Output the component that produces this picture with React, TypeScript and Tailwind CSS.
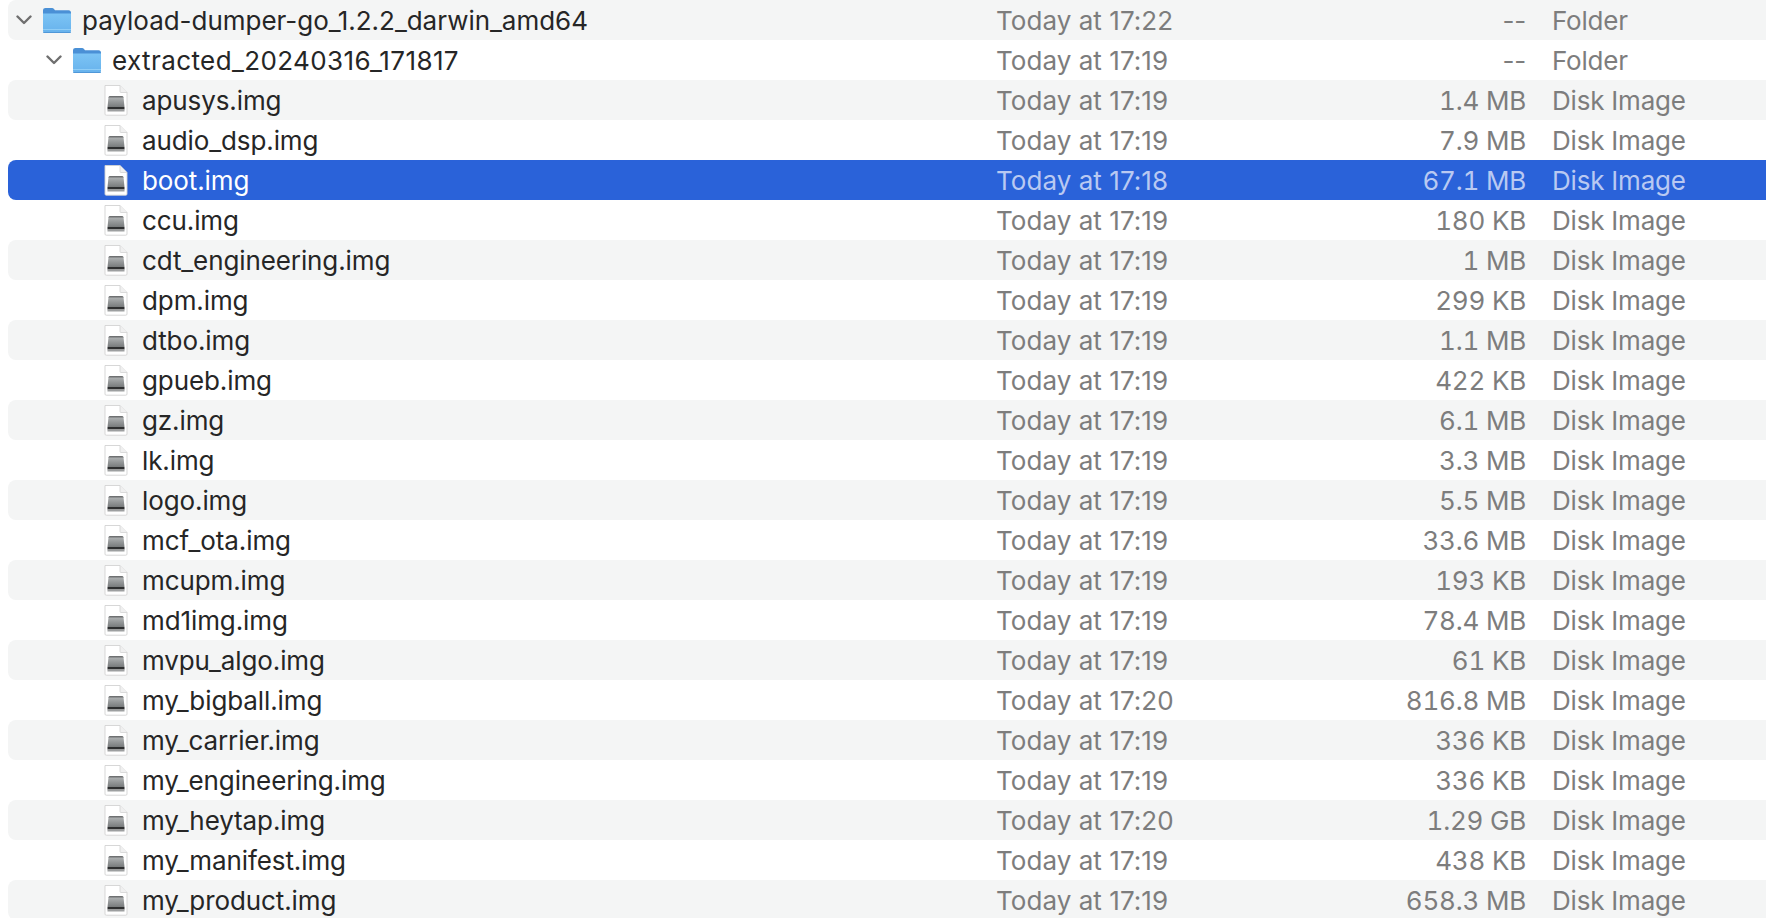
import React from "react";

type Row = { name: string; date: string; size: string; kind: string; depth: number; folder?: boolean };

const img = (name: string, size: string, date = "Today at 17:19"): Row => ({ name, date, size, kind: "Disk Image", depth: 2 });

const rows: Row[] = [
  { name: "payload-dumper-go_1.2.2_darwin_amd64", date: "Today at 17:22", size: "--", kind: "Folder", depth: 0, folder: true },
  { name: "extracted_20240316_171817", date: "Today at 17:19", size: "--", kind: "Folder", depth: 1, folder: true },
  img("apusys.img", "1.4 MB"),
  img("audio_dsp.img", "7.9 MB"),
  img("boot.img", "67.1 MB", "Today at 17:18"),
  img("ccu.img", "180 KB"),
  img("cdt_engineering.img", "1 MB"),
  img("dpm.img", "299 KB"),
  img("dtbo.img", "1.1 MB"),
  img("gpueb.img", "422 KB"),
  img("gz.img", "6.1 MB"),
  img("lk.img", "3.3 MB"),
  img("logo.img", "5.5 MB"),
  img("mcf_ota.img", "33.6 MB"),
  img("mcupm.img", "193 KB"),
  img("md1img.img", "78.4 MB"),
  img("mvpu_algo.img", "61 KB"),
  img("my_bigball.img", "816.8 MB", "Today at 17:20"),
  img("my_carrier.img", "336 KB"),
  img("my_engineering.img", "336 KB"),
  img("my_heytap.img", "1.29 GB", "Today at 17:20"),
  img("my_manifest.img", "438 KB"),
  img("my_product.img", "658.3 MB"),
];

function Folder() {
  return (
    <svg width="30" height="28" viewBox="0 0 30 28" className="block shrink-0">
      <defs>
        <linearGradient id="fb" x1="0" y1="0" x2="0" y2="1">
          <stop offset="0" stopColor="#7cc4f5" />
          <stop offset="1" stopColor="#67b2ec" />
        </linearGradient>
      </defs>
      <path d="M1 4.500C1 2.800 2 2 3.500 2h6.200c1 0 1.600.3 2.300 1l1 1.200h13.600c1.500 0 2.400 1 2.400 2.400V10H1z" fill="#4a90d6" />
      <path d="M1 7.500h28v17.300c0 1.400-.9 2.200-2.200 2.200H3.200C1.900 27 1 26.200 1 24.800z" fill="url(#fb)" />
      <rect x="1" y="23" width="28" height="1" fill="#8fcdf6" />
      <path d="M1 26h28v.2c0 .6-.9.8-2.200.8H3.200C1.900 27 1 26.800 1 26.200z" fill="#4f97d8" />
    </svg>
  );
}

function DiskFile() {
  return (
    <svg width="24" height="32" viewBox="0 0 24 32" className="block shrink-0">
      <defs>
        <linearGradient id="dk" x1="0" y1="0" x2="0" y2="1">
          <stop offset="0" stopColor="#5f6162" />
          <stop offset="0.22" stopColor="#a9acad" />
          <stop offset="1" stopColor="#787b7c" />
        </linearGradient>
      </defs>
      <path d="M1 1.500h15l7 7v21.500a1.200 1.200 0 0 1-1.200 1.200H2.200A1.200 1.200 0 0 1 1 30z" fill="#ffffff" stroke="#d2d2d2" strokeWidth="0.9" />
      <path d="M16 1.500v6a1 1 0 0 0 1 1h6" fill="#f0f0f0" stroke="#d6d6d6" strokeWidth="0.9" />
      <path d="M6 12h12c.8 0 1.300.4 1.500 1.200L20.500 23h-17l1-9.800C4.700 12.400 5.200 12 6 12z" fill="url(#dk)" />
      <rect x="3.500" y="23" width="17" height="2.500" fill="#2e2f30" />
      <rect x="3.500" y="25.500" width="17" height="2" fill="#9d9fa0" />
    </svg>
  );
}

function Chevron({ color }: { color: string }) {
  return (
    <svg width="16" height="10" viewBox="0 0 16 10" className="block shrink-0">
      <path d="M1.500 1.500 8 8l6.500-6.500" fill="none" stroke={color} strokeWidth="2.400" strokeLinecap="round" strokeLinejoin="round" />
    </svg>
  );
}

function RowView({ row, index }: { row: Row; index: number }) {
  const selected = row.name === "boot.img";
  const striped = index % 2 === 0;
  const bg = selected ? "bg-[#2a62d9]" : striped ? "bg-[#f4f5f5]" : "bg-white";
  const nameColor = selected ? "text-white" : "text-[#262626]";
  const metaColor = selected ? "text-[#b9c9f2]" : "text-[#7d7d7d]";
  const indent = row.depth === 0 ? "pl-[8px]" : row.depth === 1 ? "pl-[38px]" : "pl-[96px]";
  const nameTracking = row.depth === 0 ? "tracking-[-0.001em]" : row.depth === 1 ? "tracking-[0.4px]" : "tracking-[-0.004em]";
  const sizeNums = row.folder ? "" : "tabular-nums";
  return (
    <div className={`ml-2 flex h-10 items-center rounded-l-lg text-[26px] leading-10 whitespace-nowrap ${bg}`}>
      <div className={`flex w-[988px] shrink-0 items-center ${indent} ${nameColor}`}>
        {row.folder ? (
          <>
            <Chevron color="#6f6f6f" />
            <div className="ml-[10px] mr-[10px]"><Folder /></div>
          </>
        ) : (
          <div className="mr-[14px]"><DiskFile /></div>
        )}
        <span className={`pt-[2px] ${nameTracking}`}>{row.name}</span>
      </div>
      <div className={`w-[300px] shrink-0 pt-[2px] tracking-[0.002em] ${metaColor}`}>{row.date}</div>
      <div className={`w-[230px] shrink-0 pt-[2px] text-right tracking-[-0.008em] ${sizeNums} ${metaColor}`}>{row.size}</div>
      <div className={`ml-[26px] pt-[2px] tracking-[-0.008em] ${metaColor}`}>{row.kind}</div>
    </div>
  );
}

export default function App() {
  return (
    <div className="h-[918px] w-[1766px] overflow-hidden bg-white font-['Inter','Liberation_Sans',sans-serif]">
      {rows.map((r, i) => (
        <RowView key={r.name} row={r} index={i} />
      ))}
    </div>
  );
}
